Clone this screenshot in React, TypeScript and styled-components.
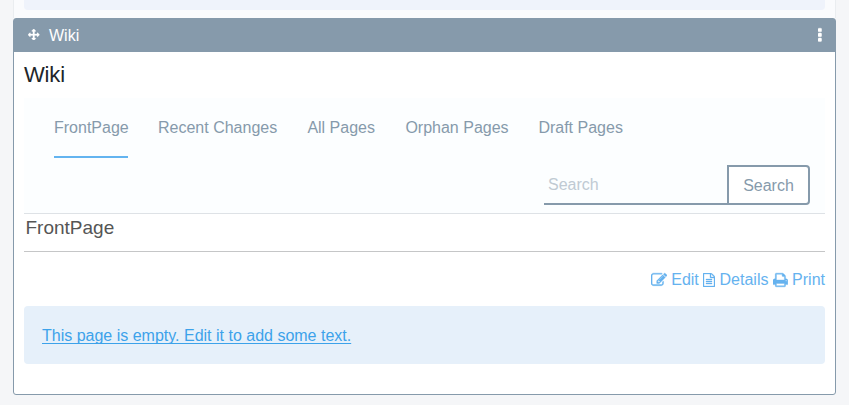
import React from "react";
import styled, { createGlobalStyle } from "styled-components";

const GlobalStyle = createGlobalStyle`
  *, *::before, *::after { box-sizing: border-box; }
  body {
    margin: 0;
    background: #f5f6f8;
    font-family: "Liberation Sans", Arial, sans-serif;
    font-size: 16px;
    line-height: 24px;
    overflow: hidden;
  }
`;

const Page = styled.div`
  height: 405px;
  padding: 0 13px;
  display: flex;
  flex-direction: column;
`;

const Column = styled.div`
  width: 823px;
  height: 18px;
  padding: 0 10px;
  background: #fafbfd;
  border: solid #eaedf0;
  border-width: 0 1px;
`;

const PreviousBox = styled.div`
  height: 10px;
  background: #eff3fb;
  border-radius: 0 0 4px 4px;
`;

const Panel = styled.section`
  width: 823px;
  height: 377px;
  display: flex;
  flex-direction: column;
  background: #fff;
  border: 1px solid #869aab;
  border-radius: 3px;
`;

const PanelHeader = styled.header`
  height: 33px;
  flex: none;
  display: flex;
  align-items: center;
  padding: 0 13px 0 14px;
  background: #869aab;
  color: #fff;
`;

const HandleSlot = styled.span`
  display: flex;
  padding-bottom: 2px;
`;

const MenuSlot = styled.span`
  display: flex;
  padding-bottom: 1px;
`;

const PanelTitle = styled.span`
  margin-left: 9.5px;
  flex: 1;
`;

const PanelBody = styled.div`
  padding: 8px 10px 0;
`;

const Heading = styled.h2`
  margin: 0;
  height: 38px;
  font-size: 22px;
  line-height: 29px;
  letter-spacing: -0.15px;
  font-weight: 400;
  color: #212529;
`;

const NavBlock = styled.div`
  height: 116px;
  background: #fcfeff;
  border-bottom: 1px solid #dee2e6;
`;

const Tabs = styled.nav`
  display: flex;
  gap: 30px;
  padding: 0 30px;
`;

const Tab = styled.a<{ $width: number; $active?: boolean }>`
  width: ${(p) => p.$width}px;
  height: 60px;
  padding-top: 18px;
  white-space: nowrap;
  color: #869aab;
  border-bottom: 2px solid ${(p) => (p.$active ? "#63b4f0" : "transparent")};
`;

const SearchRow = styled.form`
  display: flex;
  justify-content: flex-end;
  padding: 7px 15px 0 0;
`;

const SearchInput = styled.input`
  width: 183px;
  height: 40px;
  padding: 2px 4px 0;
  font: inherit;
  color: #869aab;
  background: transparent;
  border: 0;
  border-bottom: 2px solid #869aab;
  border-radius: 0;
  outline: none;
  &::placeholder {
    color: #c0cad3;
    opacity: 1;
  }
`;

const SearchButton = styled.button`
  width: 83px;
  height: 40px;
  padding: 1px 0 0;
  font: inherit;
  color: #869aab;
  background: #fff;
  border: 2px solid #869aab;
  border-radius: 0 4px 4px 0;
`;

const PageName = styled.h3`
  margin: 0;
  height: 38px;
  padding-left: 1.5px;
  font-size: 19px;
  line-height: 28px;
  font-weight: 400;
  color: #555;
  border-bottom: 1px solid #c5c6c7;
`;

const Actions = styled.div`
  margin-top: 16px;
  display: flex;
  justify-content: flex-end;
  gap: 4.4px;
`;

const Action = styled.a`
  display: flex;
  align-items: center;
  gap: 4.4px;
  color: #65b2ef;
`;

const Notice = styled.div`
  margin-top: 14px;
  height: 58px;
  padding: 18px 18px 16px;
  background: #e6f0fa;
  border-radius: 4px;
`;

const NoticeLink = styled.a`
  color: #3ca2ea;
  text-decoration: underline;
  text-decoration-skip-ink: none;
  text-decoration-thickness: 1px;
  text-underline-offset: 2px;
`;

const Glyph = styled.svg`
  display: block;
  flex: none;
  fill: currentColor;
`;

const icons = {
  arrows: {
    x: 0,
    w: 1792,
    d: "M1792 896q0 26-19 45l-256 256q-19 19-45 19t-45-19-19-45v-128h-384v384h128q26 0 45 19t19 45-19 45l-256 256q-19 19-45 19t-45-19l-256-256q-19-19-19-45t19-45 45-19h128v-384h-384v128q0 26-19 45t-45 19-45-19l-256-256q-19-19-19-45t19-45l256-256q19-19 45-19t45 19 19 45v128h384v-384h-128q-26 0-45-19t-19-45 19-45l256-256q19-19 45-19t45 19l256 256q19 19 19 45t-19 45-45 19h-128v384h384v-128q0-26 19-45t45-19 45 19l256 256q19 19 19 45z",
  },
  more: {
    x: 704,
    w: 384,
    d: "M1088 1248v192q0 40-28 68t-68 28h-192q-40 0-68-28t-28-68v-192q0-40 28-68t68-28h192q40 0 68 28t28 68zm0-512v192q0 40-28 68t-68 28h-192q-40 0-68-28t-28-68v-192q0-40 28-68t68-28h192q40 0 68 28t28 68zm0-512v192q0 40-28 68t-68 28h-192q-40 0-68-28t-28-68v-192q0-40 28-68t68-28h192q40 0 68 28t28 68z",
  },
  edit: {
    x: 0,
    w: 1792,
    d: "M888 1184l116-116-152-152-116 116v56h96v96h56zm440-720q-16-16-33 1l-350 350q-17 17-1 33t33-1l350-350q17-17 1-33zm80 594v190q0 119-84.5 203.5t-203.5 84.5h-832q-119 0-203.5-84.5t-84.5-203.5v-832q0-119 84.5-203.5t203.5-84.5h832q63 0 117 25 15 7 18 23 3 17-9 29l-49 49q-14 14-32 8-23-6-45-6h-832q-66 0-113 47t-47 113v832q0 66 47 113t113 47h832q66 0 113-47t47-113v-126q0-13 9-22l64-64q15-15 35-7t20 29zm-96-738l288 288-672 672h-288v-288zm444 132l-92 92-288-288 92-92q28-28 68-28t68 28l152 152q28 28 28 68t-28 68z",
  },
  file: {
    x: 128,
    w: 1536,
    d: "M1596 380q28 28 48 76t20 88v1152q0 40-28 68t-68 28h-1344q-40 0-68-28t-28-68v-1600q0-40 28-68t68-28h896q40 0 88 20t76 48zm-444-244v376h376q-10-29-22-41l-313-313q-12-12-41-22zm384 1528v-1024h-416q-40 0-68-28t-28-68v-416h-768v1536h1280zm-1024-864q0-14 9-23t23-9h704q14 0 23 9t9 23v64q0 14-9 23t-23 9h-704q-14 0-23-9t-9-23v-64zm736 224q14 0 23 9t9 23v64q0 14-9 23t-23 9h-704q-14 0-23-9t-9-23v-64q0-14 9-23t23-9h704zm0 256q14 0 23 9t9 23v64q0 14-9 23t-23 9h-704q-14 0-23-9t-9-23v-64q0-14 9-23t23-9h704z",
  },
  print: {
    x: 64,
    w: 1664,
    d: "M448 1536h896v-256h-896v256zm0-640h896v-384h-160q-40 0-68-28t-28-68v-160h-640v640zm1152 64q0-26-19-45t-45-19-45 19-19 45 19 45 45 19 45-19 19-45zm128 0v416q0 13-9.5 22.5t-22.5 9.5h-224v160q0 40-28 68t-68 28h-960q-40 0-68-28t-28-68v-160h-224q-13 0-22.5-9.5t-9.5-22.5v-416q0-79 56.5-135.5t135.5-56.5h64v-544q0-40 28-68t68-28h672q40 0 88 20t76 48l152 152q28 28 48 76t20 88v256h64q79 0 135.5 56.5t56.5 135.5z",
  },
};

function Icon({ name, size }: { name: keyof typeof icons; size: number }) {
  const { x, w, d } = icons[name];
  return (
    <Glyph width={(w / 1792) * size} height={size} viewBox={`${x} 0 ${w} 1792`} aria-hidden>
      <path d={d} stroke="currentColor" strokeWidth={40} />
    </Glyph>
  );
}

const tabs = [
  { label: "FrontPage", width: 74 },
  { label: "Recent Changes", width: 119.4 },
  { label: "All Pages", width: 68 },
  { label: "Orphan Pages", width: 103 },
  { label: "Draft Pages", width: 85 },
];

export default function App() {
  return (
    <>
      <GlobalStyle />
      <Page>
        <Column>
          <PreviousBox />
        </Column>
        <Panel>
          <PanelHeader>
            <HandleSlot>
              <Icon name="arrows" size={11.5} />
            </HandleSlot>
            <PanelTitle>Wiki</PanelTitle>
            <MenuSlot>
              <Icon name="more" size={17} />
            </MenuSlot>
          </PanelHeader>
          <PanelBody>
            <Heading>Wiki</Heading>
            <NavBlock>
              <Tabs>
                {tabs.map(({ label, width }, i) => (
                  <Tab key={label} $width={width} $active={i === 0}>
                    {label}
                  </Tab>
                ))}
              </Tabs>
              <SearchRow>
                <SearchInput placeholder="Search" />
                <SearchButton type="button">Search</SearchButton>
              </SearchRow>
            </NavBlock>
            <PageName>FrontPage</PageName>
            <Actions>
              <Action>
                <Icon name="edit" size={16} />
                Edit
              </Action>
              <Action>
                <Icon name="file" size={14} />
                Details
              </Action>
              <Action>
                <Icon name="print" size={16} />
                Print
              </Action>
            </Actions>
            <Notice>
              <NoticeLink>This page is empty. Edit it to add some text.</NoticeLink>
            </Notice>
          </PanelBody>
        </Panel>
      </Page>
    </>
  );
}
